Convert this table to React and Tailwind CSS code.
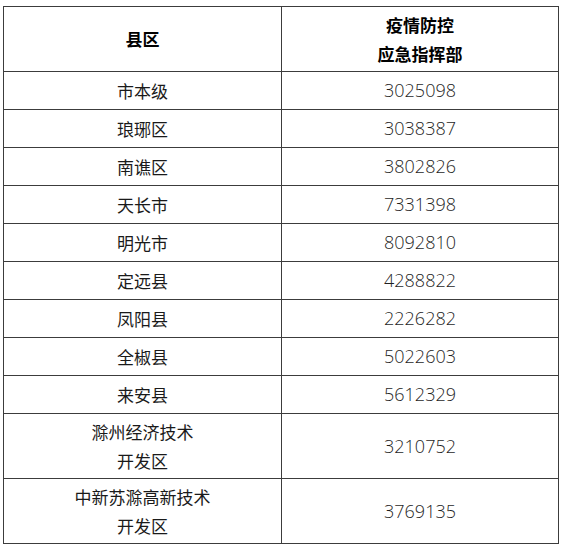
const rows = [
  { name: ['市本级'], phone: '3025098', tall: false },
  { name: ['琅琊区'], phone: '3038387', tall: false },
  { name: ['南谯区'], phone: '3802826', tall: false },
  { name: ['天长市'], phone: '7331398', tall: false },
  { name: ['明光市'], phone: '8092810', tall: false },
  { name: ['定远县'], phone: '4288822', tall: false },
  { name: ['凤阳县'], phone: '2226282', tall: false },
  { name: ['全椒县'], phone: '5022603', tall: false },
  { name: ['来安县'], phone: '5612329', tall: false },
  { name: ['滁州经济技术', '开发区'], phone: '3210752', tall: true },
  { name: ['中新苏滁高新技术', '开发区'], phone: '3769135', tall: true },
];

export default function App() {
  return (
    <div className="w-[564px] h-[548px] bg-white pt-[6px] pl-[3px] font-['Noto_Sans_CJK_SC',sans-serif]">
      <div className="w-[556px] grid grid-cols-[278px_277px] border-l border-t border-[#3c3c3c]">
        {/* header */}
        <div className="h-[65px] border-r border-b border-[#3c3c3c] flex items-center justify-center text-[17px] font-bold text-black">
          县区
        </div>
        <div className="h-[65px] border-r border-b border-[#3c3c3c] flex flex-col items-center justify-center text-[17px] leading-[29px] font-bold text-black">
          <span>疫情防控</span>
          <span>应急指挥部</span>
        </div>

        {rows.map((r) => (
          <div key={r.phone} className="contents">
            <div
              className={
                (r.tall ? 'h-[65px] ' : 'h-[38px] ') +
                'border-r border-b border-[#3c3c3c] flex flex-col items-center justify-center text-[17px] leading-[29px] text-[#1a1a1a]'
              }
            >
              {r.name.map((t) => (
                <span key={t}>{t}</span>
              ))}
            </div>
            <div
              className={
                (r.tall ? 'h-[65px] ' : 'h-[38px] ') +
                "border-r border-b border-[#3c3c3c] flex items-center justify-center font-['Open_Sans',sans-serif] font-light text-[18px] text-[#1f1f1f]"
              }
            >
              {r.phone}
            </div>
          </div>
        ))}
      </div>
    </div>
  );
}
